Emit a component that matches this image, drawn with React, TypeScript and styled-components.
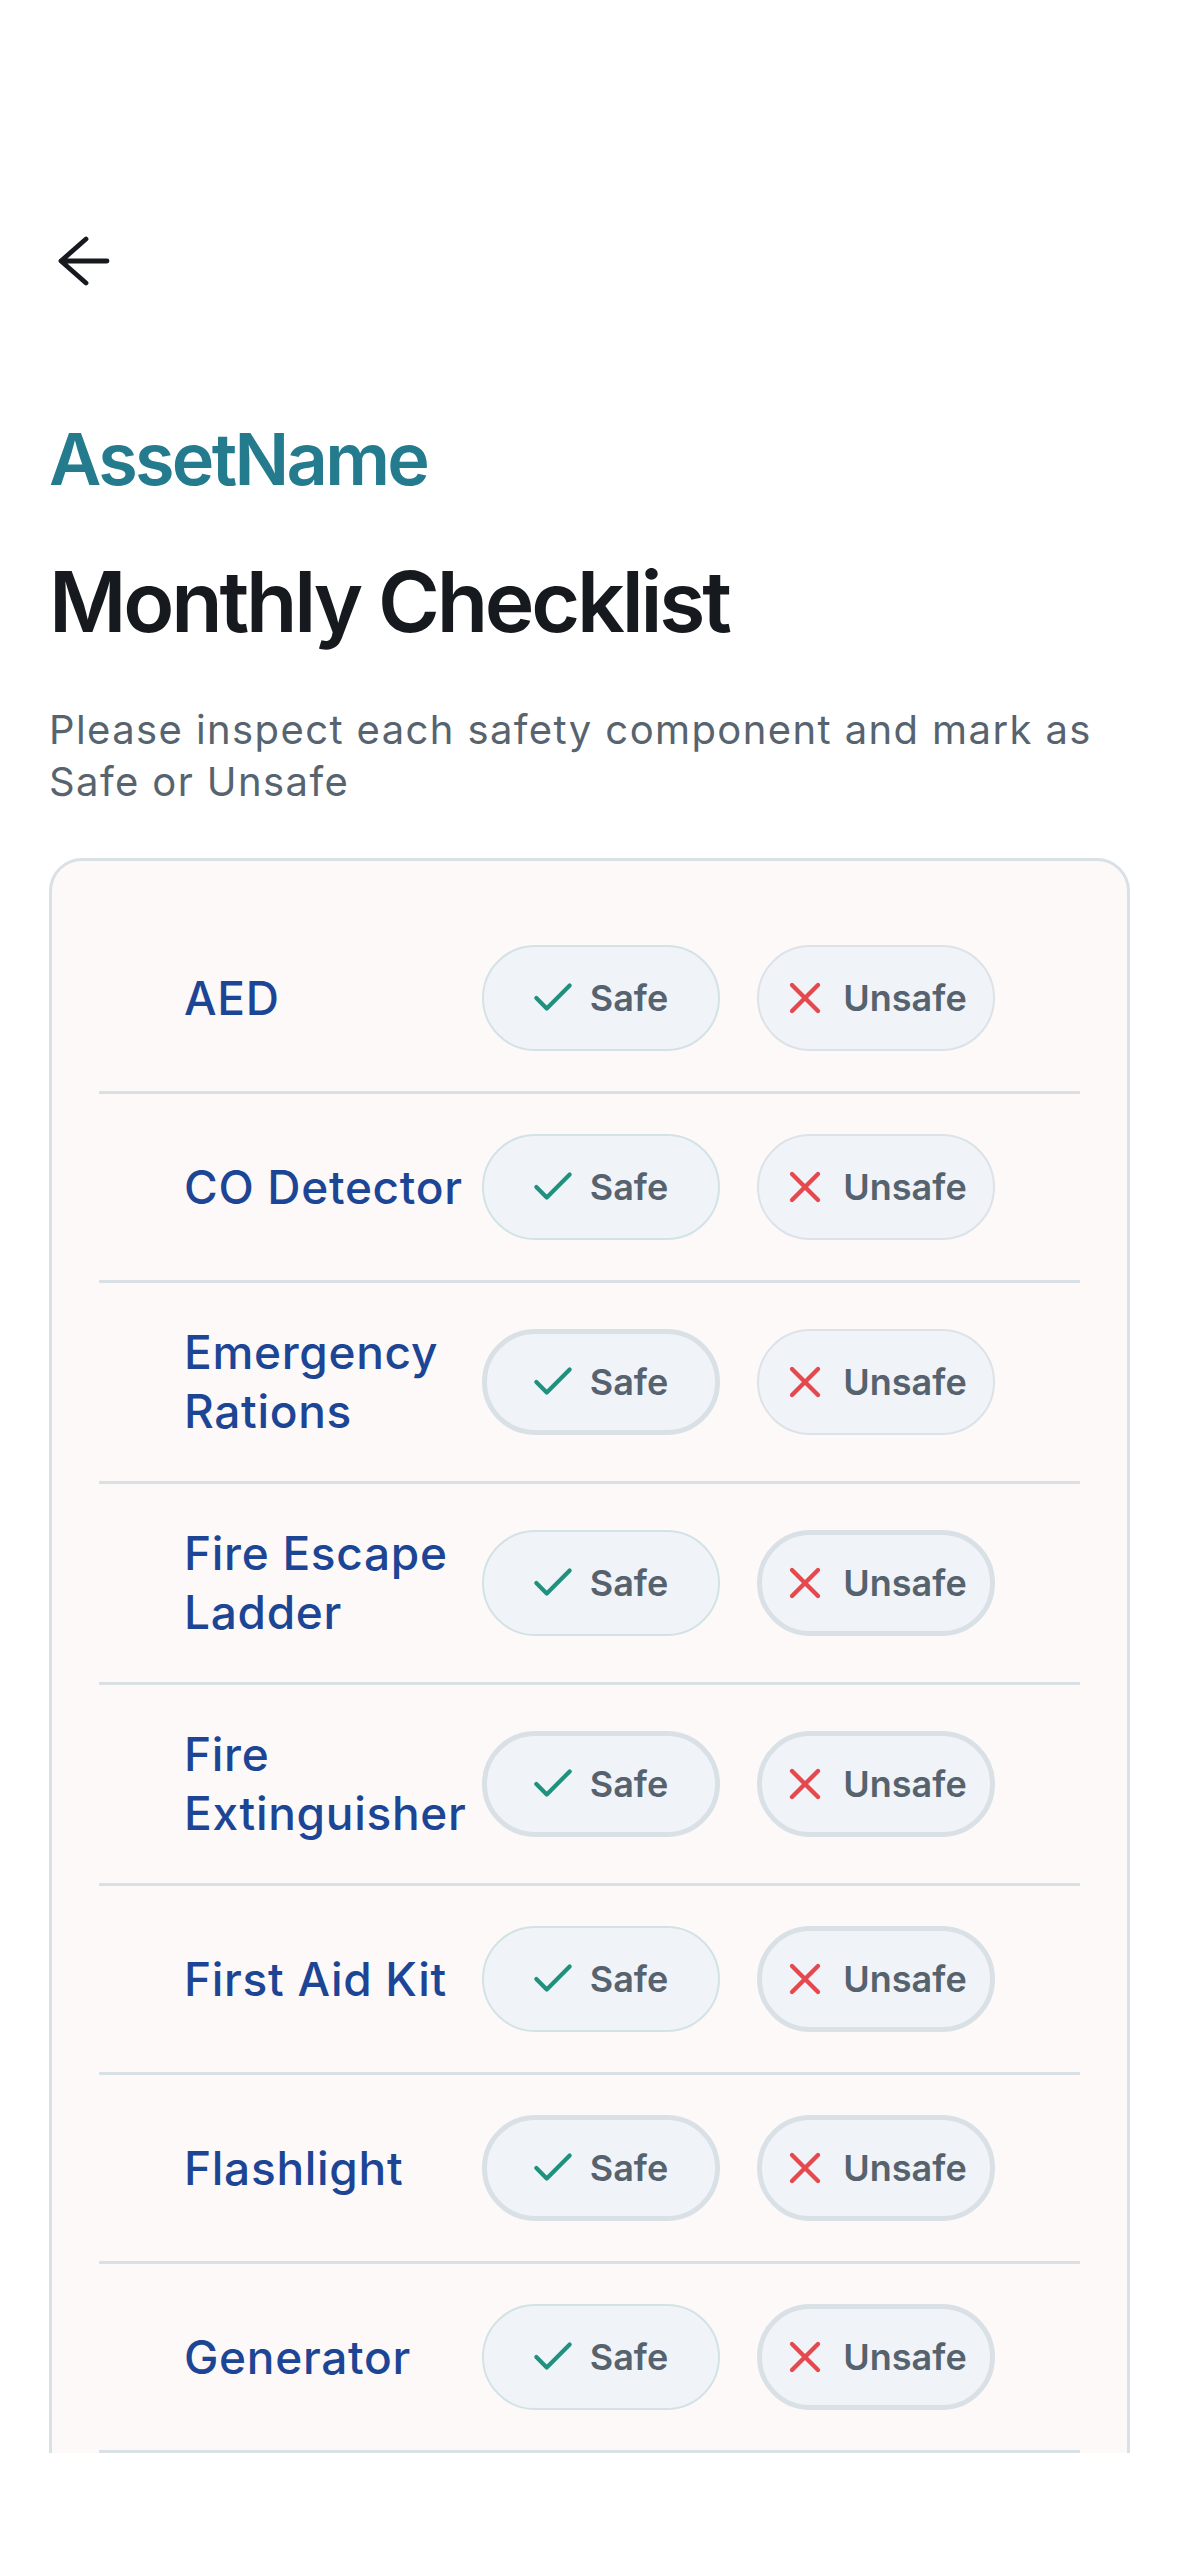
import React from "react";
import styled, { createGlobalStyle } from "styled-components";
import { Check, X } from "lucide-react";

type Item = { name: string; safeHeavy: boolean; unsafeHeavy: boolean };

const ITEMS: Item[] = [
  { name: "AED", safeHeavy: false, unsafeHeavy: false },
  { name: "CO Detector", safeHeavy: false, unsafeHeavy: false },
  { name: "Emergency Rations", safeHeavy: true, unsafeHeavy: false },
  { name: "Fire Escape Ladder", safeHeavy: false, unsafeHeavy: true },
  { name: "Fire Extinguisher", safeHeavy: true, unsafeHeavy: true },
  { name: "First Aid Kit", safeHeavy: false, unsafeHeavy: true },
  { name: "Flashlight", safeHeavy: true, unsafeHeavy: true },
  { name: "Generator", safeHeavy: false, unsafeHeavy: true }
];

const Colors = {
  Teal: "#237b8d",
  Title: "#16191d",
  Muted: "#57646f",
  Navy: "#1d4595",
  CardBg: "#fcf9f8",
  Border: "#d9e0e6",
  ButtonBg: "#f0f4f8",
  Safe: "#1f917f",
  Unsafe: "#e5484d"
};

const GlobalStyle = createGlobalStyle`
  html, body {
    margin: 0;
    padding: 0;
    background: #ffffff;
  }
  * {
    box-sizing: border-box;
  }
`;

const BackArrow: React.FC = () => (
  <svg width="52" height="52" viewBox="0 0 52 52" fill="none">
    <path
      d="M28 4 L3 26 L28 48 M3 26 H49"
      stroke={Colors.Title}
      strokeWidth="4.8"
      strokeLinecap="round"
      strokeLinejoin="round"
    />
  </svg>
);

const ChoiceButton: React.FC<{ kind: "safe" | "unsafe"; heavy: boolean }> = ({
  kind,
  heavy
}) => (
  <Choice $kind={kind} $heavy={heavy} type="button">
    {kind === "safe" ? (
      <Check size={50} strokeWidth={2} color={Colors.Safe} />
    ) : (
      <X size={52} strokeWidth={2} color={Colors.Unsafe} />
    )}
    <ChoiceLabel>{kind === "safe" ? "Safe" : "Unsafe"}</ChoiceLabel>
  </Choice>
);

export default function App() {
  return (
    <Screen>
      <GlobalStyle />
      <Viewport>
        <Header>
          <BackButton aria-label="Back">
            <BackArrow />
          </BackButton>
        </Header>
        <Content>
          <AssetName>AssetName</AssetName>
          <Title>Monthly Checklist</Title>
          <Description>
            Please inspect each safety component and mark as Safe or Unsafe
          </Description>
          <Card>
            {ITEMS.map((item) => (
              <Row key={item.name}>
                <ItemName>{item.name}</ItemName>
                <Choices>
                  <ChoiceButton kind="safe" heavy={item.safeHeavy} />
                  <ChoiceButton kind="unsafe" heavy={item.unsafeHeavy} />
                </Choices>
              </Row>
            ))}
          </Card>
        </Content>
      </Viewport>
      <BottomArea />
    </Screen>
  );
}

const Screen = styled.div`
  width: 1179px;
  height: 2556px;
  display: flex;
  flex-direction: column;
  background: #ffffff;
  font-family: Inter, "Noto Sans", sans-serif;
`;

const Viewport = styled.div`
  height: 2453px;
  overflow: hidden;
  flex-shrink: 0;
`;

const Header = styled.div`
  display: flex;
  align-items: center;
  padding: 235px 0 0 58px;
`;

const BackButton = styled.button`
  display: flex;
  padding: 0;
  border: none;
  background: transparent;
  cursor: pointer;
`;

const Content = styled.div`
  display: flex;
  flex-direction: column;
  padding: 0 49px;
`;

const AssetName = styled.h2`
  margin: 129px 0 0;
  font-size: 72px;
  line-height: 1.2;
  font-weight: 600;
  letter-spacing: -2.7px;
  color: ${Colors.Teal};
`;

const Title = styled.h1`
  margin: 50px 0 0;
  font-size: 84px;
  line-height: 1.2;
  font-weight: 600;
  letter-spacing: -3.2px;
  color: ${Colors.Title};
`;

const Description = styled.p`
  margin: 51px 0 0;
  font-size: 40px;
  line-height: 52px;
  font-weight: 400;
  letter-spacing: 1.4px;
  color: ${Colors.Muted};
`;

const Card = styled.div`
  margin-top: 50px;
  background: ${Colors.CardBg};
  border: 3px solid ${Colors.Border};
  border-radius: 33px;
  padding: 44px 47px 120px;
`;

const Row = styled.div`
  display: flex;
  align-items: center;
  padding: 40px 85px;
  border-bottom: 3px solid ${Colors.Border};
`;

const ItemName = styled.div`
  flex: 1;
  min-width: 0;
  font-size: 46px;
  line-height: 59px;
  font-weight: 500;
  letter-spacing: 0.7px;
  color: ${Colors.Navy};
`;

const Choices = styled.div`
  display: flex;
  gap: 37px;
  flex-shrink: 0;
`;

const Choice = styled.button<{ $kind: "safe" | "unsafe"; $heavy: boolean }>`
  width: 238px;
  height: 106px;
  display: flex;
  align-items: center;
  justify-content: center;
  gap: 12px;
  padding: 0 6px 0 0;
  border-radius: 53px;
  background: ${Colors.ButtonBg};
  border: ${(p) => (p.$heavy ? "5px" : "2px")} solid
    ${(p) => (p.$heavy ? "#d9e1e6" : p.$kind === "safe" ? "#d3e3e5" : "#dce2e8")};
  cursor: pointer;
  font-family: inherit;
`;

const ChoiceLabel = styled.span`
  font-size: 36px;
  font-weight: 600;
  color: #56636f;
`;

const BottomArea = styled.div`
  flex: 1;
  background: #ffffff;
`;
